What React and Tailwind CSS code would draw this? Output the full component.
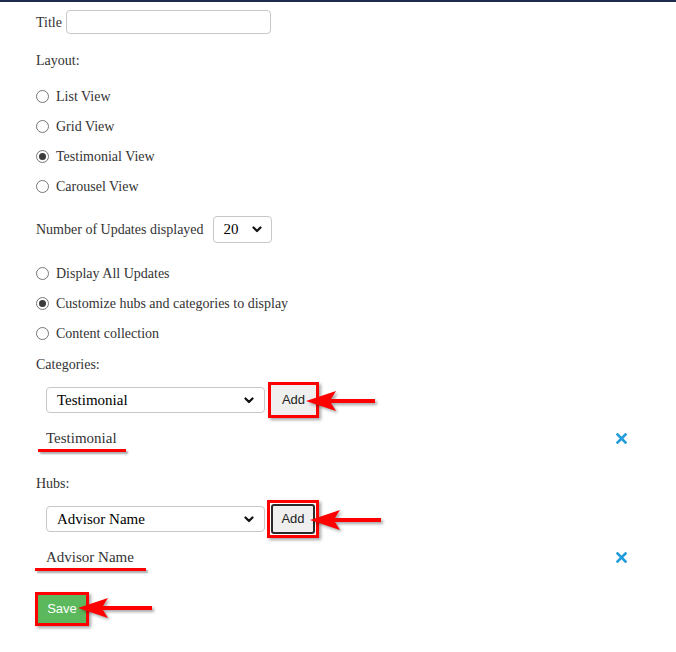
import React from "react";

const serif = { fontFamily: '"Liberation Serif", "Times New Roman", serif' };
const sans = { fontFamily: '"Liberation Sans", Arial, sans-serif' };

function Radio({ checked, label }) {
  return (
    <div className="flex h-[30px] items-center">
      <span className="flex h-[13px] w-[13px] items-center justify-center rounded-full border border-[#767676] bg-white">
        {checked && <span className="h-[7px] w-[7px] rounded-full bg-[#3b3b3b]" />}
      </span>
      <span className="ml-[7px] text-[14px] text-[#333]" style={serif}>{label}</span>
    </div>
  );
}

function Chevron() {
  return (
    <svg width="10" height="7" viewBox="0 0 10 7" className="shrink-0">
      <path d="M1.5 1.5 L5 5 L8.5 1.5" fill="none" stroke="#111" strokeWidth="2.2" strokeLinecap="round" strokeLinejoin="round" />
    </svg>
  );
}

function Select({ value, className }) {
  return (
    <div className={"flex items-center justify-between rounded-[4px] border border-[#c8c8c8] bg-white text-black " + className}>
      <span style={serif}>{value}</span>
      <Chevron />
    </div>
  );
}

function Arrow({ className, len }) {
  const L = len;
  return (
    <svg
      width={L + 4}
      height="26"
      viewBox={`0 0 ${L + 4} 26`}
      className={"pointer-events-none absolute " + className}
      style={{ filter: "drop-shadow(2px 2px 1.5px rgba(0,0,0,0.35))" }}
    >
      <polygon points={`0,10 30,0 25,8 ${L},8 ${L},12 25,12 30,20`} fill="#ff0000" />
    </svg>
  );
}

function XIcon() {
  return (
    <svg width="11" height="11" viewBox="0 0 11 11">
      <path d="M1.5 1.5 L9.5 9.5 M9.5 1.5 L1.5 9.5" stroke="#229cdb" strokeWidth="2.6" strokeLinecap="square" />
    </svg>
  );
}

export default function App() {
  return (
    <div className="relative min-h-[652px] w-[676px] bg-white" style={serif}>
      <div className="h-[2px] w-full bg-[#1f2b4d]" />
      <div className="pl-[36px]">
        <div className="mt-[8px] flex h-[24px] items-center">
          <span className="text-[14px] text-[#333]">Title</span>
          <div className="ml-[4px] h-[24px] w-[205px] rounded-[4px] border border-[#c8c8c8] bg-white" />
        </div>

        <div className="mt-[16px] flex h-[20px] items-center text-[14px] text-[#333]">Layout:</div>

        <div className="mt-[11px]">
          <Radio label="List View" />
          <Radio label="Grid View" />
          <Radio checked label="Testimonial View" />
          <Radio label="Carousel View" />
        </div>

        <div className="mt-[15px] flex h-[27px] items-center">
          <span className="text-[14px] text-[#333]">Number of Updates displayed</span>
          <Select value="20" className="ml-[9px] h-[27px] w-[59px] pl-[10px] pr-[9px] text-[15px]" />
        </div>

        <div className="mt-[15px]">
          <Radio label="Display All Updates" />
          <Radio checked label="Customize hubs and categories to display" />
          <Radio label="Content collection" />
        </div>

        <div className="mt-[6px] flex h-[20px] items-center text-[14px] text-[#333]">Categories:</div>

        <div className="relative mt-[8px] flex h-[36px] items-center pl-[10px]">
          <Select value="Testimonial" className="h-[26px] w-[219px] pl-[10px] pr-[10px] text-[15px]" />
          <div className="ml-[3px] flex h-[36px] w-[51px] items-center justify-center border-[3px] border-[#ff0000] bg-[#efefef] shadow-[2px_2px_3px_rgba(0,0,0,0.35)]">
            <span className="text-[13px] text-[#222]" style={sans}>Add</span>
          </div>
          <Arrow className="left-[270px] top-[9px]" len={69} />
        </div>

        <div className="relative mt-[10px] flex h-[20px] items-center justify-between pl-[10px] pr-[49px]">
          <span className="text-[15px] text-[#333]" style={serif}>Testimonial</span>
          <XIcon />
          <div className="absolute left-[2px] top-[21px] h-[3px] w-[88px] bg-[#ff0000] shadow-[2px_2px_2px_rgba(0,0,0,0.35)]" />
        </div>

        <div className="mt-[25px] flex h-[20px] items-center text-[14px] text-[#333]">Hubs:</div>

        <div className="relative mt-[7px] flex h-[38px] items-center pl-[10px]">
          <Select value="Advisor Name" className="h-[26px] w-[219px] pl-[10px] pr-[10px] text-[15px]" />
          <div className="ml-[2px] flex h-[38px] w-[52px] items-center justify-center border-[3px] border-[#ff0000] bg-white p-[1px] shadow-[2px_2px_3px_rgba(0,0,0,0.35)]">
            <div className="flex h-full w-full items-center justify-center rounded-[3px] border-2 border-[#2a2a2a] bg-[#efefef]">
              <span className="text-[13px] text-[#222]" style={sans}>Add</span>
            </div>
          </div>
          <Arrow className="left-[274px] top-[10px]" len={71} />
        </div>

        <div className="relative mt-[9px] flex h-[20px] items-center justify-between pl-[10px] pr-[49px]">
          <span className="text-[15px] text-[#333]" style={serif}>Advisor Name</span>
          <XIcon />
          <div className="absolute left-[-1px] top-[21px] h-[3px] w-[111px] bg-[#ff0000] shadow-[2px_2px_2px_rgba(0,0,0,0.35)]" />
        </div>

        <div className="relative mt-[25px] h-[34px]">
          <div className="ml-[-1px] flex h-[34px] w-[54px] items-center justify-center border-[3px] border-[#ff0000] bg-[#5cb85c] shadow-[2px_2px_3px_rgba(0,0,0,0.35)]">
            <span className="text-[13px] text-white" style={sans}>Save</span>
          </div>
          <Arrow className="left-[42px] top-[6px]" len={74} />
        </div>
      </div>
    </div>
  );
}
